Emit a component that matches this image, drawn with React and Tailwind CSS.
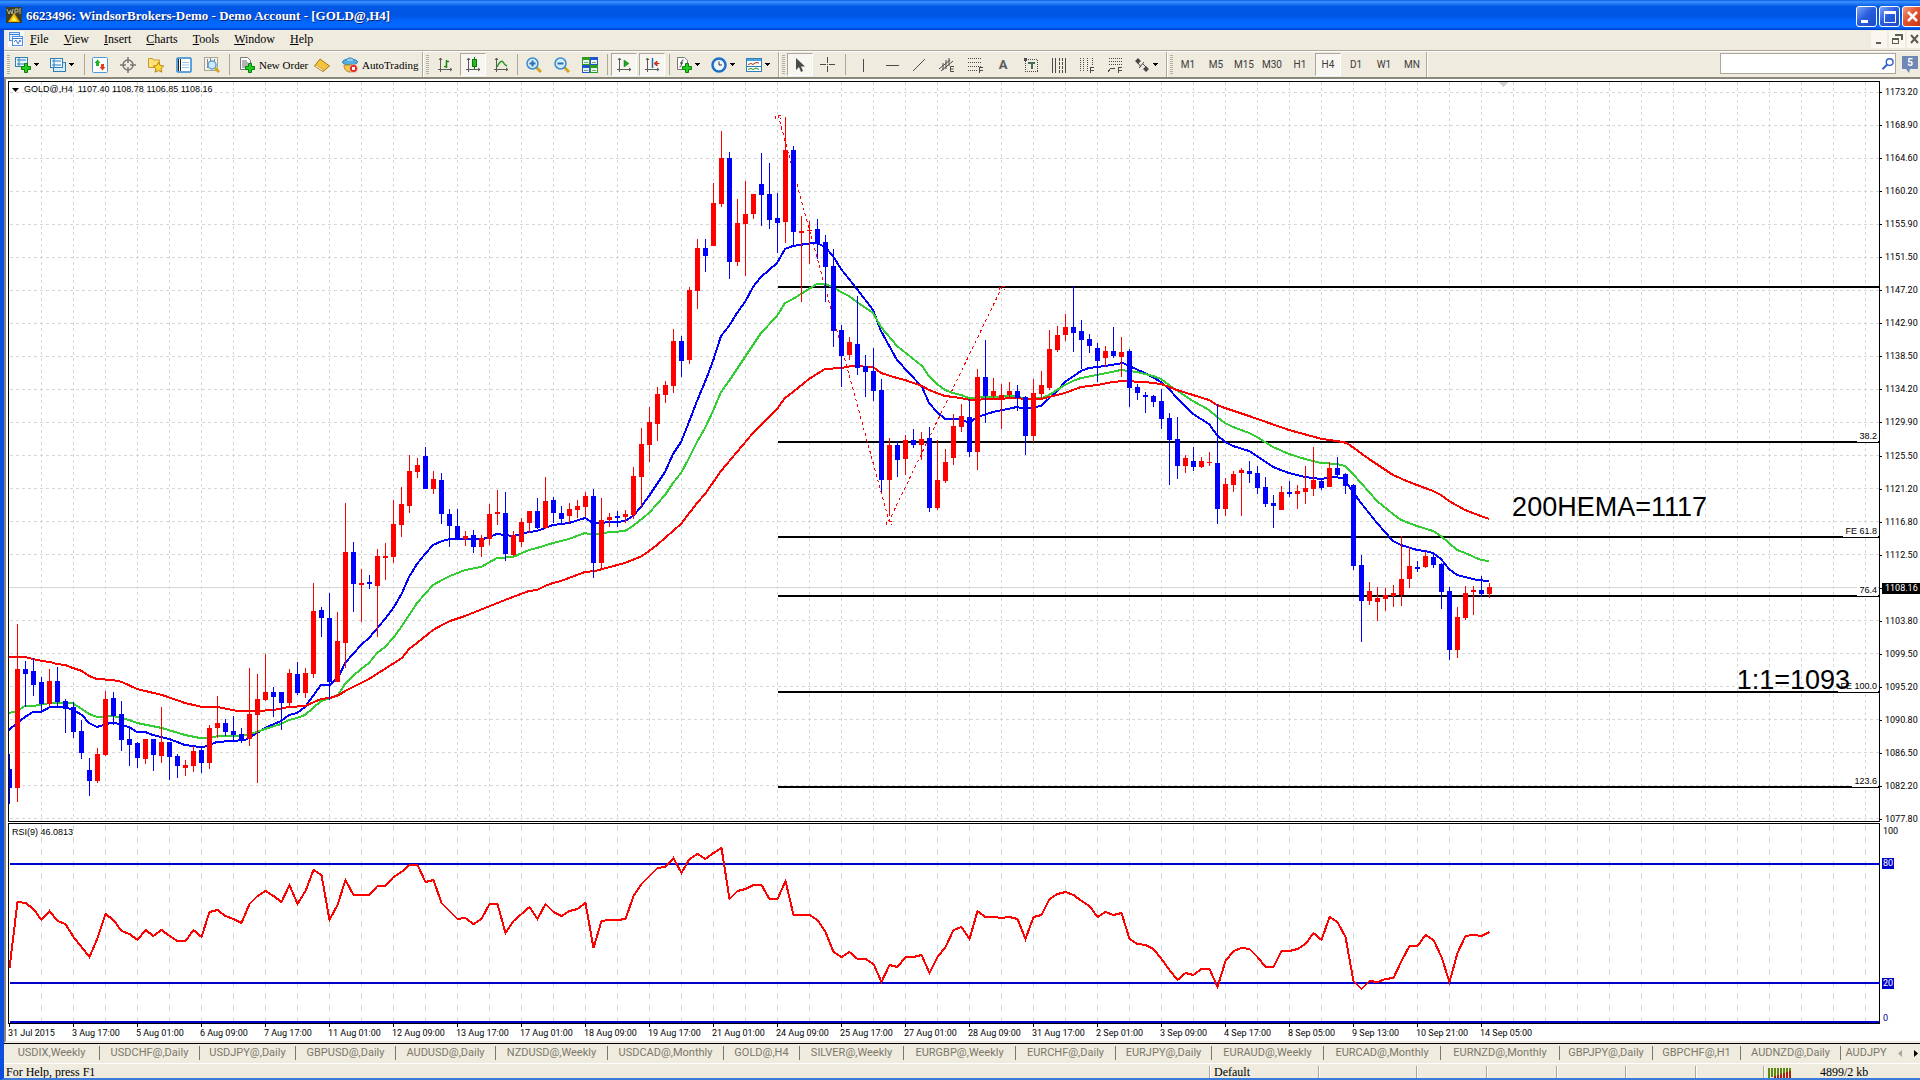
import React from "react";

const UI = "font-[Roboto,'Liberation_Sans',sans-serif]";
const ARIAL = "font-['Liberation_Sans',sans-serif]";
const SERIF = "font-['Liberation_Serif',serif]";

/* Bars: colour, high, body top, body bottom, low, in thirds of a unit below `top`. */
const SEGMENTS = [
  {
    top: 400,
    bars: `b 1062 1107 1163 1212|r 672 807 1163 1205|b 783 807 822 921|b 774 813 855 888|b 831 846 912 934|r 807 843 912 918|b 801 843 906 921|b 897 903 927 999|b 906 921 996 1014|b 960 993 1059 1077|b 1074 1110 1143 1188|r 1044 1062 1143 1149|r 873 897 1065 1068|b 876 894 948 975|b 903 942 1020 1053|b 984 1017 1035 1098|b 1026 1029 1074 1104|r 1017 1017 1077 1092|b 1017 1017 1065 1113|r 921 1026 1068 1089|b 1026 1026 1071 1140|b 1062 1068 1098 1134|r 1080 1095 1104 1128|r 1038 1053 1098 1116|b 1041 1050 1089 1119|r 975 984 1089 1107|r 888 969 984 1014|b 957 969 996 1008|b 948 993 1005 1020|b 984 1002 1020 1029|r 804 942 1017 1038|r 822 897 945 1149|r 762 876 900 903|b 861 876 891 951|b 876 876 909 990|r 807 819 909 921|b 786 822 879 885|r 804 819 879 894|r 549 633 822 834|b 621 630 654 711|b 579 654 846 900|r 636 723 846 846|r 309 456 729 804|b 426 456 552 636|r 507 549 555 666|b 525 546 552 567|r 447 468 558 711|r 429 468 474 540|r 300 372 471 489|r 261 312 375 411|r 165 213 318 339|r 174 195 216 234|b 141 168 267 267|r 213 237 267 282|b 219 240 342 372|b 327 342 378 441|b 327 378 417 420|r 393 408 417 438|b 390 405 441 459`,
  },
  {
    top: 100,
    bars: `r 1305 1314 1341 1371|r 1212 1242 1317 1335|r 1170 1236 1242 1275|b 1176 1239 1362 1383|r 1293 1305 1365 1368|r 1254 1266 1326 1341|r 1233 1233 1269 1299|b 1194 1233 1284 1287|r 1131 1203 1284 1287|b 1191 1200 1239 1269|b 1218 1239 1257 1275|r 1209 1227 1248 1269|r 1200 1218 1230 1254|r 1176 1188 1221 1251|b 1167 1188 1389 1434|r 1194 1260 1389 1410|r 1239 1251 1260 1281|b 1233 1248 1254 1281|r 1230 1242 1251 1269|r 1101 1128 1245 1257|r 984 1032 1131 1221|r 921 966 1035 1086|r 861 882 972 1023|r 843 855 885 909|r 687 723 858 879|b 708 723 783 831|r 561 570 780 792|r 417 444 573 627|b 417 444 468 516|r 249 309 438 438|r 93 174 312 321|b 156 174 486 537|r 297 369 486 498|r 243 342 372 528|r 282 282 342 357|b 159 252 285 378|b 189 282 360 387|b 279 354 369 459|r 51 150 366 429|b 138 150 396 438|r 348 393 399 606|r 363 390 393 492|b 357 387 432 477|b 405 426 501 606|b 447 498 693 741|b 675 690 768 861|r 711 726 765 780|b 588 732 804 825|b 765 798 816 891|b 744 813 873 903|b 837 870 1140 1176|r 1014 1035 1140 1248|b 1023 1035 1080 1131|r 1005 1020 1077 1125`,
  },
  {
    top: 260,
    bars: `b 507 540 555 564|r 516 537 555 600|b 501 534 744 756|r 540 660 744 750|r 567 606 663 669|r 462 498 594 615|r 432 468 501 516|b 417 471 576 591|r 327 351 576 630|b 240 351 408 489|r 354 393 408 414|r 372 405 417 507|r 366 393 405 411|b 375 393 414 453|b 408 411 528 585|r 357 399 528 546|r 333 375 402 414|r 210 267 384 390|r 198 225 270 276|r 162 201 225 243|b 78 201 219 276|b 180 213 240 327|b 222 237 258 279|b 249 264 303 366|r 258 273 294 321|b 201 273 288 294|r 231 276 291 351|b 267 273 384 441|b 372 381 399 420|b 396 405 411 459|b 405 408 426 441|b 387 423 477 507|b 459 474 540 675|b 471 537 618 657|r 585 594 618 639|b 561 603 621 633|r 591 603 621 624|r 576 606 609 618`,
  },
  {
    top: 340,
    bars: `b 192 369 507 552|r 414 432 507 528|r 393 402 435 456|r 384 390 399 528|b 363 393 402 429|b 378 399 444 462|b 411 441 492 501|b 465 489 498 564|r 438 456 510 510|b 423 456 462 471|r 435 453 462 507|r 378 444 456 492|r 321 420 447 468|b 414 423 444 450|r 366 384 441 441|b 351 384 405 411|b 399 402 438 462|b 432 435 678 690|b 645 675 783 906|r 726 753 783 795|r 741 774 786 843|r 744 765 777 813|r 735 759 768 801|r 588 717 765 798|r 621 678 717 744|b 663 681 687 696|r 636 648 681 684|b 642 651 675 684|b 669 672 756 807|b 741 753 930 960|r 801 831 930 954|r 738 759 834 840|r 738 750 756 825|b 708 750 762 771|r 729 741 762 774`,
  },
];

const CANDLES = SEGMENTS.flatMap(({ top, bars }) =>
  bars.split("|").map((row) => {
    const [c, ...v] = row.split(" ");
    return [c === "r" ? "#ff0000" : "#0000ff", ...v.map((n) => Math.round(top + Number(n) / 3))];
  })
);

const RSI = [
  445, 245, 250, 266, 300, 272, 303, 313, 350, 380, 410, 355, 282, 300, 334, 343, 360, 329, 348, 329, 348, 363, 363, 329,
  351, 276, 269, 289, 298, 310, 251, 228, 212, 228, 247, 194, 252, 214, 149, 165, 300, 255, 179, 225, 225, 225, 198, 198,
  172, 157, 136, 136, 187, 179, 250, 273, 297, 294, 313, 298, 251, 251, 340, 303, 281, 260, 297, 251, 277, 289, 274, 266,
  249, 385, 303, 300, 300, 297, 229, 192, 168, 145, 140, 113, 160, 118, 103, 118, 98, 83, 238, 213, 208, 195, 195, 237,
  237, 184, 285, 285, 285, 300, 336, 395, 412, 395, 416, 417, 433, 487, 434, 442, 411, 411, 404, 458, 412, 380, 331, 320,
  357, 272, 291, 291, 295, 290, 297, 357, 292, 284, 238, 223, 215, 226, 242, 257, 291, 275, 286, 278, 358, 371, 376, 388,
  418, 450, 481, 458, 465, 447, 447, 500, 424, 394, 383, 387, 412, 440, 440, 393, 393, 386, 371, 338, 360, 290, 307, 350,
  482, 508, 482, 485, 478, 473, 424, 378, 378, 345, 360, 410, 485, 398, 349, 345, 348, 335,
];

const MA_RED =
  "9,657 25,657 33,659 42,661 50,662 57,664 65,665 73,668 82,671 89,676 97,679 113,680 122,682 137,689 162,695 185,703 202,707 217,707 238,711 257,711 273,710 289,707 305,706 321,699 330,698 339,695 345,691 369,679 402,658 409,649 417,643 433,630 442,625 450,621 465,616 480,610 505,600 529,591 537,590 545,586 553,583 561,581 585,572 595,571 625,563 642,556 649,551 657,545 681,524 697,503 705,494 721,471 753,433 777,409 785,398 793,392 809,379 825,369 841,368 852,366 873,367 881,373 897,378 905,380 922,386 929,390 945,396 961,398 970,400 993,399 1017,398 1025,399 1041,399 1057,395 1065,393 1081,387 1097,385 1113,382 1123,381 1145,382 1161,384 1177,390 1193,395 1209,400 1217,405 1225,408 1249,416 1289,430 1322,439 1337,441 1347,443 1369,459 1393,475 1409,482 1433,491 1441,495 1449,501 1465,510 1489,519";
const MA_GREEN =
  "9,713 17,711 25,706 33,706 50,703 72,703 82,709 89,714 97,717 113,716 122,718 129,720 137,723 162,728 185,735 200,738 209,738 218,736 238,736 247,735 257,732 265,729 281,724 289,720 297,718 305,715 321,701 330,698 338,695 345,684 353,676 361,669 369,663 377,653 385,647 394,637 402,626 417,603 433,585 442,580 450,576 465,570 481,567 497,558 513,557 529,550 537,548 553,543 569,539 585,533 593,535 601,533 625,531 633,526 649,513 665,495 673,483 681,473 689,458 697,442 705,428 713,411 721,392 729,381 745,357 761,333 777,316 785,303 793,299 809,289 817,284 825,284 833,287 841,292 849,296 857,302 873,313 881,327 897,346 922,366 929,376 937,384 945,390 953,393 961,395 969,398 985,397 1017,396 1025,399 1042,398 1049,395 1065,385 1073,381 1081,378 1097,375 1121,370 1129,371 1137,372 1153,376 1161,379 1169,385 1185,396 1193,401 1209,410 1217,417 1225,423 1233,427 1249,433 1257,437 1273,447 1289,454 1305,459 1321,463 1337,464 1345,466 1353,474 1361,483 1377,501 1393,514 1401,520 1417,526 1433,531 1441,536 1457,550 1465,553 1481,560 1489,561";
const MA_BLUE =
  "9,730 17,723 25,717 33,712 41,712 50,707 65,707 73,710 82,715 89,723 97,727 110,723 115,723 129,727 137,732 145,732 153,735 169,739 185,745 200,747 204,747 217,742 245,740 257,733 265,728 281,721 289,715 297,713 305,707 313,696 321,685 330,685 339,676 345,663 353,654 361,645 369,638 385,619 394,607 402,593 409,577 417,564 425,554 433,545 442,541 450,539 463,539 483,539 497,534 513,536 529,532 537,531 545,528 553,525 569,523 585,518 593,523 617,522 625,521 633,516 641,507 649,496 665,472 673,454 681,442 689,422 697,401 705,382 713,361 721,336 729,326 737,313 745,302 753,287 761,277 777,263 785,249 793,246 812,243 817,243 825,247 833,256 841,269 857,289 873,310 881,331 897,360 922,387 929,403 937,412 945,419 961,419 969,423 977,417 993,412 1017,407 1025,409 1041,406 1057,391 1065,382 1081,371 1089,368 1105,366 1123,363 1129,366 1145,373 1161,382 1169,389 1177,398 1193,414 1209,424 1217,435 1225,442 1233,446 1249,451 1257,456 1273,467 1289,473 1305,477 1321,479 1333,477 1343,478 1353,492 1361,503 1377,523 1393,541 1401,545 1417,550 1425,551 1433,553 1441,559 1449,569 1457,575 1477,580 1489,581";

const FIBO = [287, 442, 537, 596, 692, 787];
const FIBO_LABELS = [
  ["38.2", "top-[349px]"],
  ["FE 61.8", "top-[444px]"],
  ["76.4", "top-[503px]"],
  ["FE 100.0", "top-[599px]"],
  ["123.6", "top-[694px]"],
];

const PRICES =
  "1173.20 1168.90 1164.60 1160.20 1155.90 1151.50 1147.20 1142.90 1138.50 1134.20 1129.90 1125.50 1121.20 1116.80 1112.50 1108.16 1103.80 1099.50 1095.20 1090.80 1086.50 1082.20 1077.80".split(
    " "
  );

const DATES = [
  "31 Jul 2015", "3 Aug 17:00", "5 Aug 01:00", "6 Aug 09:00", "7 Aug 17:00", "11 Aug 01:00", "12 Aug 09:00", "13 Aug 17:00",
  "17 Aug 01:00", "18 Aug 09:00", "19 Aug 17:00", "21 Aug 01:00", "24 Aug 09:00", "25 Aug 17:00", "27 Aug 01:00",
  "28 Aug 09:00", "31 Aug 17:00", "2 Sep 01:00", "3 Sep 09:00", "4 Sep 17:00", "8 Sep 05:00", "9 Sep 13:00", "10 Sep 21:00",
  "14 Sep 05:00",
];

const TABS = [
  "USDIX,Weekly", "USDCHF@,Daily", "USDJPY@,Daily", "GBPUSD@,Daily", "AUDUSD@,Daily", "NZDUSD@,Weekly", "USDCAD@,Monthly",
  "GOLD@,H4", "SILVER@,Weekly", "EURGBP@,Weekly", "EURCHF@,Daily", "EURJPY@,Daily", "EURAUD@,Weekly", "EURCAD@,Monthly",
  "EURNZD@,Monthly", "GBPJPY@,Daily", "GBPCHF@,H1", "AUDNZD@,Daily", "AUDJPY",
];

const VERTICALS = Array.from({ length: 58 }, (_, i) => 41 + i * 32);

/* ---------- icons ---------- */

function Icon({ children, crisp }) {
  return (
    <svg width="16" height="16" viewBox="0 0 16 16" fill="none" className="shrink-0" shapeRendering={crisp ? "crispEdges" : "auto"} aria-hidden="true">
      {children}
    </svg>
  );
}

const Plus = ({ x = 6, y = 6 }) => (
  <path
    transform={`translate(${x} ${y})`}
    d="M3.5.5h3v3h3v3h-3v3h-3v-3h-3v-3h3z"
    fill="#1fd01f"
    stroke="#0a7d0a"
    strokeWidth="1"
  />
);

const F = ({ x, y, letter = "F" }) => (
  <path
    transform={`translate(${x} ${y})`}
    d={letter === "F" ? "M.5 6V.5H4M1 3.5h2.5" : "M4 .5H.5v5H4M1 3h2.5"}
    stroke="#4a4a4a"
  />
);

const Axes = () => <path d="M3.5 1v14M1 12.5h14M2 3l1.5-2L5 3M13 11l2 1.5-2 1.5" stroke="#5a5a5a" />;

const I = {
  newChart: (
    <Icon>
      <rect x=".5" y=".5" width="12" height="9" fill="#e8f4ff" stroke="#2f7fb5" />
      <path d="M2 3h9M4 1v8M2 7h9" stroke="#2f7fb5" />
      <Plus />
    </Icon>
  ),
  profiles: (
    <Icon>
      <rect x="3.5" y="5.5" width="12" height="9" fill="#d7ebfb" stroke="#2f7fb5" />
      <rect x=".5" y="1.5" width="12" height="9" fill="#eff8ff" stroke="#2f7fb5" />
      <path d="M2 4h9M4 2v8M2 8h9" stroke="#2f7fb5" />
    </Icon>
  ),
  market: (
    <Icon>
      <rect x=".5" y=".5" width="15" height="15" rx="1" fill="#fff" stroke="#4a9be0" />
      <path d="M5.5 2.5l3 3.5H7v3H4V6H2.5z" fill="#22b422" />
      <path d="M10.5 13.5l-3-3.5H9V7h3v3h1.5z" fill="#e04020" />
    </Icon>
  ),
  target: (
    <Icon>
      <circle cx="8" cy="8" r="5" stroke="#777" strokeWidth="1.5" />
      <path d="M8 0v6M8 10v6M0 8h6M10 8h6" stroke="#777" strokeWidth="1.5" />
    </Icon>
  ),
  navigator: (
    <Icon>
      <path d="M.5 10.5v-9h4l1 1.5h6v7.5z" fill="#ffe27a" stroke="#c79a2b" />
      <path d="M10.5 5l1.7 3.5 3.5.5-2.6 2.5.7 3.7-3.3-1.8-3.3 1.8.7-3.7L5.3 9l3.5-.5z" fill="#ffd83a" stroke="#b8860b" />
    </Icon>
  ),
  data: (
    <Icon>
      <rect x="1" y="1" width="14" height="14" rx="1" fill="#fff" stroke="#2a86d8" strokeWidth="1.5" />
      <path d="M2.5 2v12M4.5 2v12" stroke="#222" strokeWidth="1" />
      <path d="M6 5.5h7M6 8h7M6 10.5h7" stroke="#9cc7ee" />
    </Icon>
  ),
  tester: (
    <Icon>
      <rect x=".5" y=".5" width="13" height="13" fill="#f5f3ea" stroke="#a7a596" />
      <path d="M3.5 2v9M6.5 1v6M10.5 2v6" stroke="#888" />
      <circle cx="8" cy="8" r="4" fill="#cfe8fb" stroke="#5c9fd4" strokeWidth="1.5" />
      <path d="M11 11l4 4" stroke="#d6a21c" strokeWidth="2.5" />
    </Icon>
  ),
  order: (
    <Icon>
      <path d="M1.5.5h7l3 3v9h-10z" fill="#fff" stroke="#777" />
      <path d="M3 4h5M3 6h6M3 8h6M3 10h4" stroke="#666" />
      <Plus />
    </Icon>
  ),
  editor: (
    <Icon>
      <path d="M6 2l9.5 7L9 14.5.5 9z" fill="#f6c33c" stroke="#a8761a" />
      <path d="M.5 9l8.5 5.5v-2L2 8z" fill="#fff2c0" stroke="#a8761a" strokeWidth=".5" />
    </Icon>
  ),
  auto: (
    <Icon>
      <ellipse cx="8" cy="5" rx="7.5" ry="3" fill="#58aee0" stroke="#2d7fb4" />
      <path d="M4 4c0-4 8-4 8 0" fill="#8fd0f2" stroke="#2d7fb4" />
      <path d="M2 8c0 5 3 7 6 7s5-3 5-7z" fill="#f4c84a" stroke="#b5862a" />
      <circle cx="11.5" cy="11.5" r="4" fill="#dd2c1c" stroke="#fff" strokeWidth=".5" />
      <rect x="10" y="10" width="3" height="3" fill="#fff" />
    </Icon>
  ),
  bars: (
    <Icon>
      <Axes />
      <path d="M9.5 3v8M7 9.5h2.5M9.5 4.5H12" stroke="#1b8a1b" strokeWidth="1.5" />
    </Icon>
  ),
  candles: (
    <Icon>
      <Axes />
      <path d="M9.5 0v12" stroke="#0a7d0a" />
      <rect x="7.5" y="2.5" width="4" height="7" fill="#1fbf1f" stroke="#0a7d0a" />
    </Icon>
  ),
  line: (
    <Icon>
      <Axes />
      <path d="M4 10c2-5 5-7 6-5s2 3 4 4" stroke="#2a9a2a" strokeWidth="1.5" />
    </Icon>
  ),
  zoomIn: (
    <Icon>
      <path d="M10 10l5 5" stroke="#d6a21c" strokeWidth="3" />
      <circle cx="6.5" cy="6.5" r="5.5" fill="#d5ecfd" stroke="#3b8ccc" strokeWidth="1.5" />
      <path d="M3.5 6.5h6M6.5 3.5v6" stroke="#2b6fae" strokeWidth="2" />
    </Icon>
  ),
  zoomOut: (
    <Icon>
      <path d="M10 10l5 5" stroke="#d6a21c" strokeWidth="3" />
      <circle cx="6.5" cy="6.5" r="5.5" fill="#d5ecfd" stroke="#3b8ccc" strokeWidth="1.5" />
      <path d="M3.5 6.5h6" stroke="#2b6fae" strokeWidth="2" />
    </Icon>
  ),
  tile: (
    <Icon crisp>
      <rect width="8" height="8" fill="#2f9e1c" />
      <rect x="8" width="8" height="8" fill="#2256c8" />
      <rect y="8" width="8" height="8" fill="#2256c8" />
      <rect x="8" y="8" width="8" height="8" fill="#2f9e1c" />
      <path d="M1 3h6v4H1zM9 3h6v4H9zM1 11h6v4H1zM9 11h6v4H9z" fill="#e9f3ff" />
      <path d="M2 5.5h4M10 5.5h4M2 13.5h4M10 13.5h4" stroke="#7aa86a" />
    </Icon>
  ),
  scroll: (
    <Icon>
      <Axes />
      <path d="M8 3l5 3.5L8 10z" fill="#1fa51f" stroke="#0a7d0a" strokeWidth=".5" />
    </Icon>
  ),
  shift: (
    <Icon>
      <Axes />
      <path d="M8.5 1v10" stroke="#1c6ea4" strokeWidth="1.5" />
      <path d="M10 6.5l3-2.5v5zM12 6.5h3.5" fill="#c8341c" stroke="#c8341c" />
    </Icon>
  ),
  indicators: (
    <Icon>
      <path d="M1.5.5h7l3 3v9h-10z" fill="#fff" stroke="#777" />
      <path d="M7.5 3C5.5 2.5 6 5 5.5 7S5 10 3.5 10M4 6h3" stroke="#333" />
      <Plus />
    </Icon>
  ),
  clock: (
    <Icon>
      <circle cx="8" cy="8" r="6.5" fill="#eef6fd" stroke="#1f6fc8" strokeWidth="2.5" />
      <path d="M8 4.5V8h3" stroke="#333" />
    </Icon>
  ),
  template: (
    <Icon>
      <rect x=".5" y="1.5" width="15" height="13" fill="#fff" stroke="#2f7fb5" />
      <rect x="1" y="2" width="14" height="2" fill="#4aa2e0" />
      <path d="M1 9.5h14" stroke="#2f7fb5" />
      <path d="M2 7.5l3-1 2 1 3-2 3 .5" stroke="#b03020" />
      <path d="M2 12.5l3-1 2 1 3-1.5 3 1.5" stroke="#22902a" />
    </Icon>
  ),
  cursor: (
    <Icon>
      <path d="M4 1v12l3-3 2 5 2-1-2-4.5h4z" fill="#4a4a4a" />
    </Icon>
  ),
  cross: (
    <Icon crisp>
      <path d="M7.5 0v6M7.5 9v6M0 7.5h6M9 7.5h6M7 7.5h1" stroke="#4a4a4a" />
    </Icon>
  ),
  vline: (
    <Icon crisp>
      <path d="M8.5 2v13" stroke="#4a4a4a" />
    </Icon>
  ),
  hline: (
    <Icon crisp>
      <path d="M3 8.5h13" stroke="#4a4a4a" />
    </Icon>
  ),
  trend: (
    <Icon>
      <path d="M2 14L14 2" stroke="#4a4a4a" />
    </Icon>
  ),
  channel: (
    <Icon>
      <path d="M0 12L11 3M2 14L14 4M4 6v7M7 3v9M10 1v8" stroke="#4a4a4a" />
      <F x={11} y={9} letter="E" />
    </Icon>
  ),
  fibo: (
    <Icon crisp>
      <path d="M1 1.5h14M1 5.5h14M1 9.5h14M1 13.5h9" stroke="#4a4a4a" strokeDasharray="1 1" />
      <F x={12} y={10} />
    </Icon>
  ),
  label: (
    <Icon crisp>
      <rect x="2.5" y="2.5" width="12" height="12" stroke="#4a4a4a" strokeDasharray="1 1" />
      <path d="M1 1h3v3H1z" fill="#4a4a4a" />
      <path d="M5 6h7M8.5 6v6" stroke="#4a6a5a" strokeWidth="2" />
    </Icon>
  ),
  periods: (
    <Icon crisp>
      <path d="M1.5 1v15M4.5 1v15M14.5 1v15" stroke="#4a4a4a" />
      <path d="M8.5 1v15M11.5 1v15" stroke="#4a4a4a" strokeDasharray="3 1" />
    </Icon>
  ),
  timeZones: (
    <Icon crisp>
      <path d="M1.5 1v13M4.5 1v13M8.5 1v13M13.5 1v8" stroke="#4a4a4a" strokeDasharray="1 1" />
      <F x={11} y={10} />
    </Icon>
  ),
  fan: (
    <Icon crisp>
      <path d="M2 1.5h13M2 4.5h13M2 7.5h13" stroke="#4a4a4a" strokeDasharray="1 1" />
      <path d="M1 15l3-4 4 1" stroke="#4a4a4a" />
      <F x={11} y={10} />
    </Icon>
  ),
  arrows: (
    <Icon>
      <path d="M1 4l3-3 3 3-3 3zM9 12l3-3 3 3-3 3z" fill="#4a4a4a" />
      <path d="M4 6l3 4M9 7l3 3M5 11l5-6" stroke="#4a4a4a" />
    </Icon>
  ),
};

/* ---------- toolbar pieces ---------- */

const Grip = ({ className }) => (
  <div className={`flex shrink-0 items-center justify-center ${className}`}>
    <div className="h-[19px] w-[3px] bg-[repeating-linear-gradient(#b0ad9c_0_1px,#f3f0e6_1px_2px)]" />
  </div>
);

const Sep = ({ className }) => (
  <div className={`flex shrink-0 items-center justify-center ${className}`}>
    <div className="h-[21px] w-px bg-[#aca899]" />
  </div>
);

const Edge = () => <div className="h-[25px] w-0.5 shrink-0 border-l border-[#aca899] bg-white" />;

const PRESSED = "border border-[#aca899] border-r-white border-b-white bg-[#f8f6f1]";

function Tool({ icon, name, pressed, children }) {
  return (
    <button type="button" aria-label={name} aria-pressed={pressed} className="flex h-[25px] w-7 shrink-0 items-center justify-center">
      <span className={`flex h-[23px] w-[26px] items-center justify-center ${pressed ? PRESSED : ""}`}>{icon || children}</span>
    </button>
  );
}

function DropTool({ icon, name }) {
  return (
    <button type="button" aria-label={name} className="flex h-[25px] w-[35px] shrink-0 items-center gap-[3px] pl-[3px]">
      {icon}
      <svg width="5" height="3" viewBox="0 0 5 3" shapeRendering="crispEdges" aria-hidden="true">
        <path d="M0 0h5L2.5 3z" fill="#000" />
      </svg>
    </button>
  );
}

function WinButton({ name, tone, children }) {
  return (
    <button type="button" aria-label={name} className={`h-[21px] w-[21px] overflow-hidden rounded-[3px] border border-white ${tone}`}>
      <svg width="19" height="19" viewBox="0 0 19 19" aria-hidden="true">{children}</svg>
    </button>
  );
}

function TitleBar() {
  return (
    <header className="flex h-[30px] shrink-0 items-center bg-[linear-gradient(#0a5ae6_0,#3d95ff_6%,#2c82f8_10%,#0058e6_22%,#0054e3_50%,#0066ff_72%,#0068ff_90%,#003cc8_100%)] pl-[6px]">
      <svg width="16" height="16" viewBox="0 0 16 16" aria-hidden="true">
        <rect width="16" height="16" fill="#3c3f2a" />
        <path d="M1 2l2 5 1.5-4L6 7l1-5M9 2v5M9 2h3v3H9M14 1v6" stroke="#b8b890" fill="none" />
        <path d="M8 6l6 9H2z" fill="#f0b400" />
        <path d="M8 9l3 5H5z" fill="#fff04a" />
      </svg>
      <h1 className={`ml-1 grow pt-0.5 text-[13px] leading-4 font-bold whitespace-nowrap text-white [text-shadow:1px_1px_0_#0a1f6b] ${SERIF}`}>
        6623496: WindsorBrokers-Demo - Demo Account - [GOLD@,H4]
      </h1>
      <div className="-mr-[3px] flex gap-[2px] pt-[3px]">
        <WinButton name="Minimize" tone="bg-[linear-gradient(135deg,#7fa4f5,#2a5fe0_45%,#1c48c4)]">
          <path d="M4 13h7v3H4z" fill="#fff" />
        </WinButton>
        <WinButton name="Maximize" tone="bg-[linear-gradient(135deg,#7fa4f5,#2a5fe0_45%,#1c48c4)]">
          <path d="M4 4h12v12H4zM5 7v8h10V7z" fill="#fff" fillRule="evenodd" />
        </WinButton>
        <WinButton name="Close" tone="bg-[linear-gradient(135deg,#f0a080,#e2502c_45%,#c83410)]">
          <path d="M5 5l9 9M14 5l-9 9" stroke="#fff" strokeWidth="2.5" />
        </WinButton>
      </div>
    </header>
  );
}

function MenuBar() {
  return (
    <nav className="flex h-[22px] shrink-0 items-start border-b border-white bg-[#efebde] shadow-[inset_0_-1px_0_#aca899]">
      <svg className="mt-px ml-1" width="16" height="16" viewBox="0 0 16 16" aria-hidden="true">
        <rect width="16" height="16" fill="#f7fbff" />
        <rect x="1.5" y="1.5" width="10" height="8" fill="#e5f1ff" stroke="#4a8fe0" />
        <rect x="4.5" y="5.5" width="10" height="9" fill="#fff" stroke="#4a8fe0" />
        <path d="M6 11l2-2 2 4 2-4 1 2M2 3.5h9M5 7.5h9" stroke="#3a7fd8" fill="none" />
      </svg>
      <div className={`flex grow gap-[3px] text-[12px] leading-[18px] text-black ${SERIF}`}>
        {["File", "View", "Insert", "Charts", "Tools", "Window", "Help"].map((m) => (
          <button key={m} type="button" className="px-1.5">
            <u className="underline-offset-1">{m[0]}</u>
            {m.slice(1)}
          </button>
        ))}
      </div>
      <div className="-mr-[3px] flex gap-0.5 pt-px">
        {[
          ["Minimize chart", <path key="a" d="M5 11h5v2H5z" fill="#5c5c50" />],
          ["Restore chart", <path key="b" d="M6 3h8v6h-2V5H6zM3 7h7v6H3zM4 9v3h5V9z" fill="#5c5c50" fillRule="evenodd" />],
          ["Close chart", <path key="c" d="M4 4l7 8M11 4l-7 8" stroke="#5c5c50" strokeWidth="2" />],
        ].map(([n, p]) => (
          <button key={n} type="button" aria-label={n} className="h-[17px] w-4 bg-[#f9f7f0]">
            <svg width="16" height="17" viewBox="0 0 16 17" aria-hidden="true">{p}</svg>
          </button>
        ))}
      </div>
    </nav>
  );
}

function ToolBar() {
  const text = `text-[11px] leading-4 whitespace-nowrap text-black ${SERIF}`;
  return (
    <div className="flex h-[27px] shrink-0 items-start border-b-2 border-[#8a887a] bg-[#efebde]">
      <Grip className="h-[25px] w-2" />
      <DropTool icon={I.newChart} name="New chart" />
      <DropTool icon={I.profiles} name="Profiles" />
      <Sep className="h-[25px] w-1" />
      <Tool icon={I.market} name="Market Watch" />
      <Tool icon={I.target} name="Crosshair data" />
      <Tool icon={I.navigator} name="Navigator" />
      <Tool icon={I.data} name="Terminal" />
      <Tool icon={I.tester} name="Strategy Tester" />
      <Sep className="h-[25px] w-[7px]" />
      <button type="button" className="flex h-[25px] w-[75px] shrink-0 items-center gap-1 pl-1.5">
        {I.order}
        <span className={text}>New Order</span>
      </button>
      <Tool icon={I.editor} name="MetaEditor" />
      <button type="button" className="flex h-[25px] w-[84px] shrink-0 items-center gap-1 pl-1.5">
        {I.auto}
        <span className={text}>AutoTrading</span>
      </button>
      <div className="w-0.5 shrink-0" />
      <Edge />
      <Grip className="h-[25px] w-[7px]" />
      <Tool icon={I.bars} name="Bar chart" />
      <Tool icon={I.candles} name="Candlesticks" pressed />
      <Tool icon={I.line} name="Line chart" />
      <Sep className="h-[25px] w-[5px]" />
      <Tool icon={I.zoomIn} name="Zoom in" />
      <Tool icon={I.zoomOut} name="Zoom out" />
      <Tool icon={I.tile} name="Tile windows" />
      <Sep className="h-[25px] w-1.5" />
      <Tool icon={I.scroll} name="Auto scroll" pressed />
      <Tool icon={I.shift} name="Chart shift" pressed />
      <Sep className="h-[25px] w-[7px]" />
      <DropTool icon={I.indicators} name="Indicators" />
      <DropTool icon={I.clock} name="Periods" />
      <DropTool icon={I.template} name="Templates" />
      <Edge />
      <Grip className="h-[25px] w-1.5" />
      <Tool icon={I.cursor} name="Cursor" pressed />
      <Tool icon={I.cross} name="Crosshair" />
      <Sep className="h-[25px] w-[7px]" />
      <Tool icon={I.vline} name="Vertical line" />
      <Tool icon={I.hline} name="Horizontal line" />
      <Tool icon={I.trend} name="Trendline" />
      <Tool icon={I.channel} name="Equidistant channel" />
      <Tool icon={I.fibo} name="Fibonacci retracement" />
      <Tool name="Text">
        <span className={`text-[13px] font-bold text-[#5a5a5a] ${UI}`}>A</span>
      </Tool>
      <Tool icon={I.label} name="Text label" />
      <Tool icon={I.periods} name="Cycle lines" />
      <Tool icon={I.timeZones} name="Fibonacci time zones" />
      <Tool icon={I.fan} name="Fibonacci fan" />
      <div className="w-0.5 shrink-0" />
      <DropTool icon={I.arrows} name="Arrows" />
      <Edge />
      <Grip className="h-[25px] w-1.5" />
      {["M1", "M5", "M15", "M30", "H1", "H4", "D1", "W1", "MN"].map((p) => (
        <Tool key={p} name={p} pressed={p === "H4"}>
          <span className={`text-[10px] text-[#3c3c3c] ${UI}`}>{p}</span>
        </Tool>
      ))}
      <Edge />
      <label className="mt-px ml-auto flex h-[21px] w-44 items-center border border-[#aca899] bg-white pr-px">
        <input type="text" aria-label="Search" className="h-full min-w-0 grow bg-white px-1 text-[11px] outline-none" />
        <svg width="14" height="14" viewBox="0 0 14 14" fill="none" aria-hidden="true">
          <circle cx="9" cy="5" r="3.5" stroke="#2f62c8" strokeWidth="1.5" />
          <path d="M6.5 7.5L1.5 12.5" stroke="#2f62c8" strokeWidth="2" />
        </svg>
      </label>
      <button type="button" aria-label="5 messages" className="mt-1 ml-1.5 w-[18px]">
        <svg width="17" height="17" viewBox="0 0 17 17" aria-hidden="true">
          <path d="M0 0h16v13H8l-1 4-3-4H0z" fill="#6f87b5" />
          <text x="8" y="10" fontSize="10" fontWeight="bold" fill="#fff" textAnchor="middle" fontFamily="Roboto, sans-serif">5</text>
        </svg>
      </button>
    </div>
  );
}

/* ---------- charts ---------- */

function PriceChart() {
  return (
    <section className="relative min-h-0 flex-[741_1_0%] overflow-hidden">
      <svg className="block h-full w-full" viewBox="8 81 1872 741" preserveAspectRatio="none" shapeRendering="crispEdges" fill="none" role="img" aria-label="GOLD H4 candlestick chart">
        <rect x="8" y="81" width="1872" height="741" fill="#fff" />
        <g stroke="#d3d7d6" strokeDasharray="3 3">
          {VERTICALS.map((x) => (
            <path key={x} d={`M${x + 0.5} 82V821`} />
          ))}
          {PRICES.map((p, i) => i !== 15 && <path key={p} d={`M10 ${92.5 + 33 * i}H1879`} />)}
        </g>
        <path d="M9 587.5H1879" stroke="#d3d7d6" />
        <path d="M1498 82h11l-5.500 5z" fill="#cdd1d0" />
        <g stroke="#000" strokeWidth="2">
          {FIBO.map((y) => (
            <path key={y} d={`M778 ${y}H1879`} />
          ))}
        </g>
        <g stroke="#ff0000" strokeDasharray="3 3">
          <path d="M778 115L889 521L1002 287" />
          <path d="M775.5 119v-4h5v4M886.5 525v-4h5v4M999.5 290v-4h5v4" />
        </g>
        <g strokeWidth="2">
          <polyline points={MA_BLUE} stroke="#0000ff" />
          <polyline points={MA_GREEN} stroke="#32cd32" />
          <polyline points={MA_RED} stroke="#ff0000" />
        </g>
        {CANDLES.map(([c, hi, top, bottom, lo], i) => (
          <path key={i} fill={c} d={`M${9 + 8 * i} ${hi}h1V${lo}h-1zM${7 + 8 * i} ${top}h5V${bottom}h-5z`} />
        ))}
        <rect x="8.5" y="81.5" width="1871" height="740" stroke="#000" />
      </svg>
      <p className={`absolute top-[3px] left-1 flex items-center gap-[5px] text-[9px] leading-[11px] whitespace-pre text-black ${ARIAL}`}>
        <svg width="7" height="4" viewBox="0 0 7 4" aria-hidden="true">
          <path d="M0 0h7L3.500 4z" fill="#000" />
        </svg>
        GOLD@,H4  1107.40 1108.78 1106.85 1108.16
      </p>
      {FIBO_LABELS.map(([t, pos]) => (
        <span key={t} className={`absolute right-0.5 h-3 bg-white pr-px pl-0.5 text-[9px] leading-[13px] text-black ${ARIAL} ${pos}`}>{t}</span>
      ))}
      <span className={`absolute top-[411px] right-[173px] text-[27px] leading-[30px] text-black ${ARIAL}`}>200HEMA=1117</span>
      <span className={`absolute top-[584px] right-[30px] text-[27px] leading-[30px] text-black ${ARIAL}`}>1:1=1093</span>
    </section>
  );
}

function RsiChart() {
  return (
    <section className="relative min-h-0 flex-[201_1_0%] overflow-hidden">
      <svg className="block h-full w-full" viewBox="8 823 1872 201" preserveAspectRatio="none" shapeRendering="crispEdges" fill="none" role="img" aria-label="RSI indicator">
        <rect x="8" y="823" width="1872" height="201" fill="#fff" />
        <g stroke="#d3d7d6" strokeDasharray="6 6">
          {VERTICALS.map((x) => (
            <path key={x} d={`M${x + 0.5} 825V1021`} />
          ))}
        </g>
        <rect x="8.5" y="823.5" width="1871" height="200" stroke="#000" />
        <path d="M10 864H1880M10 983H1880M10 1022H1879" stroke="#0000cd" strokeWidth="2" />
        <polyline points={RSI.map((v, i) => `${9.5 + 8 * i},${Math.round(820 + v / 3)}`).join(" ")} stroke="#ff0000" strokeWidth="2" />
      </svg>
      <p className={`absolute top-1 left-1 text-[9px] leading-[11px] text-black ${ARIAL}`}>RSI(9) 46.0813</p>
    </section>
  );
}

function Axis() {
  return (
    <aside className={`flex w-10 shrink-0 flex-col bg-white text-[9px] leading-[11px] text-black ${UI}`}>
      <div className="flex min-h-0 flex-[741_1_0%] flex-col justify-between pt-1.5">
        {PRICES.map((p) => (
          <div key={p} className="-mb-0.5 flex h-[11px] items-center">
            <span className="h-px w-[2px] bg-black" />
            <span className={p === "1108.16" ? "h-[11px] grow bg-black pl-[3px] text-white" : "pl-[3px]"}>{p}</span>
          </div>
        ))}
      </div>
      <div className="relative mt-px min-h-0 flex-[201_1_0%]">
        <span className="absolute top-[2px] left-[3px]">100</span>
        <span className="absolute top-[17%] left-[2px] bg-[#0000cd] px-px text-white">80</span>
        <span className="absolute top-[77%] left-[2px] bg-[#0000cd] px-px text-white">20</span>
        <span className="absolute bottom-0 left-[2px] px-px text-[#00008b]">0</span>
      </div>
    </aside>
  );
}

function StatusBar() {
  const cell = "border-l border-[#aca899] shadow-[inset_1px_0_0_#fff]";
  return (
    <footer className={`flex h-[14px] shrink-0 items-stretch overflow-hidden bg-[#efebde] pt-[2px] text-[12px] leading-[12px] text-black ${SERIF}`}>
      <span className="min-w-0 grow pl-0.5">For Help, press F1</span>
      <span className={`w-[109px] shrink-0 pl-1 ${cell}`}>Default</span>
      <span className={`w-[98px] shrink-0 ${cell}`} />
      <span className={`w-[70px] shrink-0 ${cell}`} />
      <span className={`w-[70px] shrink-0 ${cell}`} />
      <span className={`w-[69px] shrink-0 ${cell}`} />
      <span className={`w-[70px] shrink-0 ${cell}`} />
      <span className={`w-[68px] shrink-0 ${cell}`} />
      <span className={`flex w-[157px] shrink-0 items-start pl-1 ${cell}`}>
        <svg className="mt-0.5" width="24" height="10" viewBox="0 0 24 10" shapeRendering="crispEdges" aria-hidden="true">
          {Array.from({ length: 8 }, (_, i) => (
            <g key={i}>
              <rect x={i * 3} y="0" width="2" height={10 - i} fill="#5f8a10" />
              {i > 1 && <rect x={i * 3} y={10 - i} width="2" height={i} fill="#b02010" />}
            </g>
          ))}
        </svg>
        <span className="ml-7">4899/2 kb</span>
      </span>
    </footer>
  );
}

export default function App() {
  return (
    <div className="flex h-screen flex-col overflow-hidden bg-[#efebde]">
      <TitleBar />
      <div className="flex min-h-0 grow flex-col border-b-2 border-l-4 border-b-[#3b7ad8] border-l-[#0a4fe0]">
        <MenuBar />
        <ToolBar />
        <main className="flex min-h-0 grow flex-col border-b-2 border-l-2 border-b-[#efebde] border-l-[#8a887a] bg-white pt-0.5 pl-0.5">
          <div className="flex min-h-0 grow">
            <div className="flex min-w-0 grow flex-col gap-px">
              <PriceChart />
              <RsiChart />
            </div>
            <Axis />
          </div>
          <div className={`flex h-[17px] shrink-0 overflow-hidden text-[9px] leading-[11px] text-black ${UI}`}>
            {DATES.map((d) => (
              <div key={d} className="w-16 shrink-0 whitespace-nowrap">
                <div className="ml-px h-[3px] w-px bg-black" />
                <span className="block pt-px">{d}</span>
              </div>
            ))}
          </div>
        </main>
        <div className={`flex h-[21px] shrink-0 border-t border-b border-t-black border-b-white bg-[#efebde] text-[11px] text-[#7b786a] ${UI}`}>
          <div className="grid min-w-0 grow grid-cols-[96px_100px_96px_100px_100px_112px_116px_76px_104px_112px_100px_96px_112px_117px_119px_93px_88px_100px_50px] overflow-hidden pt-[2px]">
            {TABS.map((t, i) => (
              <button key={t} type="button" className={`h-[14px] text-center leading-[14px] whitespace-nowrap ${i < TABS.length - 1 ? "border-r border-[#7b786a]" : ""}`}>
                {t}
              </button>
            ))}
          </div>
          <div className="flex w-[22px] shrink-0 items-center justify-between pr-0.5">
            <button type="button" aria-label="Scroll tabs left">
              <svg width="4" height="7" viewBox="0 0 4 7" aria-hidden="true"><path d="M4 0v7L0 3.500z" fill="#aca899" /></svg>
            </button>
            <button type="button" aria-label="Scroll tabs right">
              <svg width="4" height="7" viewBox="0 0 4 7" aria-hidden="true"><path d="M0 0v7l4-3.500z" fill="#000" /></svg>
            </button>
          </div>
        </div>
        <StatusBar />
      </div>
    </div>
  );
}
